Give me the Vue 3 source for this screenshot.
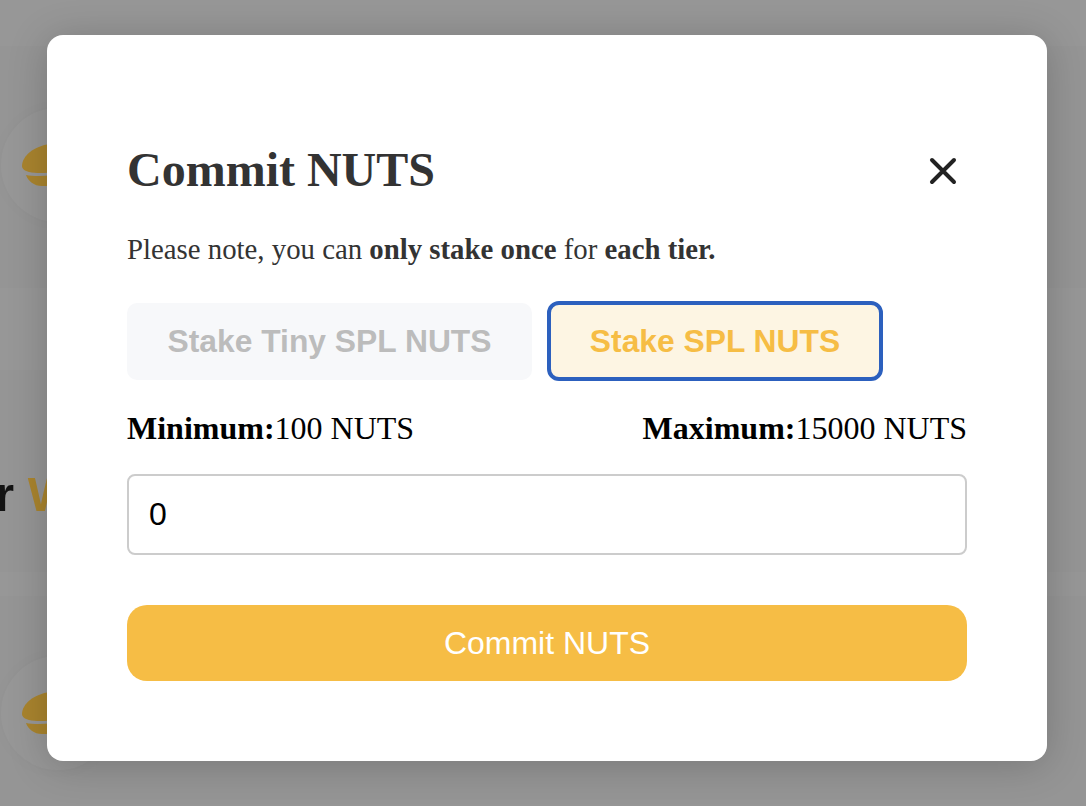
<script setup>
const tiers = [
  { label: 'Stake Tiny SPL NUTS', active: false },
  { label: 'Stake SPL NUTS', active: true },
]
</script>

<template>
  <div class="page">
    <div class="backdrop-page">
      <section class="row row-top">
        <div class="coin-circle">
          <svg class="coin" viewBox="0 0 60 46" width="60" height="46">
            <path d="M2 23C2 13 14 3 30 1L45 1L45 27C35 30 18 31 9 29C5 28 2 26 2 23Z" />
            <path d="M6 32C16 34 32 33 45 30L45 43L22 43C14 43 8 38 6 32Z" />
          </svg>
        </div>
      </section>
      <section class="row row-mid">
        <h2 class="bg-heading">r <span>W</span></h2>
      </section>
      <section class="row row-bottom">
        <div class="coin-circle">
          <svg class="coin" viewBox="0 0 60 46" width="60" height="46">
            <path d="M2 23C2 13 14 3 30 1L45 1L45 27C35 30 18 31 9 29C5 28 2 26 2 23Z" />
            <path d="M6 32C16 34 32 33 45 30L45 43L22 43C14 43 8 38 6 32Z" />
          </svg>
        </div>
      </section>
    </div>
    <div class="overlay">
      <div class="modal">
        <header class="modal-head">
          <h1>Commit NUTS</h1>
          <button class="close" aria-label="Close">
            <svg viewBox="0 0 30 30" width="30" height="30">
              <path d="M4 4L26 26M26 4L4 26" />
            </svg>
          </button>
        </header>
        <p class="note">Please note, you can <b>only stake once</b> for <b>each tier.</b></p>
        <div class="tabs">
          <button v-for="t in tiers" :key="t.label" class="tab" :class="{ active: t.active }">{{ t.label }}</button>
        </div>
        <div class="limits">
          <span><b>Minimum:</b>100 NUTS</span>
          <span><b>Maximum:</b>15000 NUTS</span>
        </div>
        <input class="amount" type="text" value="0" />
        <button class="commit">Commit NUTS</button>
      </div>
    </div>
  </div>
</template>

<style>
html, body { margin: 0; padding: 0; }
</style>

<style scoped>
.page {
  position: relative;
  width: 1086px;
  height: 806px;
  overflow: hidden;
  font-family: "Liberation Sans", Arial, sans-serif;
}
.backdrop-page {
  display: flex;
  flex-direction: column;
  gap: 0;
  height: 806px;
  padding-top: 46px;
  box-sizing: border-box;
  background: #d9d9d9;
}
.row {
  display: flex;
  align-items: flex-start;
  background: #d6d6d6;
  box-sizing: border-box;
}
.row-top { height: 242px; padding-top: 62px; }
.row-mid { height: 202px; margin-top: 82px; padding-top: 96px; }
.row-bottom { flex: 1; margin-top: 24px; padding-top: 60px; }
.coin-circle {
  width: 114px;
  height: 114px;
  margin-left: 1px;
  border-radius: 50%;
  background: #d9d9d9;
  box-shadow: 0 0 14px rgba(0, 0, 0, 0.03);
  padding: 35px 0 0 19px;
  box-sizing: border-box;
}
.coin { display: block; fill: #f2bd42; }
.bg-heading {
  margin: 0 0 0 -5px;
  font-size: 49px;
  line-height: 56px;
  font-weight: 700;
  color: #1c1c1c;
  white-space: pre;
}
.bg-heading span { color: #f2bd42; }
.overlay {
  position: absolute;
  inset: 0;
  background: rgba(0, 0, 0, 0.3);
  display: flex;
  align-items: flex-start;
  padding: 35px 0 0 47px;
  box-sizing: border-box;
}
.modal {
  width: 1000px;
  height: 726px;
  box-sizing: border-box;
  padding: 107px 80px 0;
  background: #fff;
  border-radius: 16px;
  box-shadow: 0 4px 40px rgba(0, 0, 0, 0.2);
  display: flex;
  flex-direction: column;
  font-family: "Liberation Serif", "Times New Roman", serif;
}
.modal-head {
  display: flex;
  justify-content: space-between;
  align-items: center;
  height: 56px;
}
.modal-head h1 {
  margin: 0;
  font-size: 48px;
  line-height: 56px;
  font-weight: 700;
  color: #333;
}
.close {
  border: 0;
  background: none;
  padding: 0;
  width: 30px;
  height: 30px;
  margin: 2px 9px 0 0;
}
.close svg { display: block; }
.close path { stroke: #222; stroke-width: 4; stroke-linecap: round; fill: none; }
.note {
  margin: 35px 0 0;
  font-size: 28.8px;
  line-height: 32px;
  color: #333;
}
.tabs {
  display: flex;
  align-items: center;
  gap: 15px;
  margin-top: 36px;
}
.tab {
  height: 77px;
  width: 405px;
  padding: 0;
  border: 0;
  border-radius: 10px;
  background: #f7f8fa;
  color: #bcbcbc;
  font: 700 31.8px "Liberation Sans", Arial, sans-serif;
}
.tab.active {
  height: 80px;
  width: 336px;
  border: 4px solid #2c60be;
  border-radius: 12px;
  background: #fdf5e3;
  color: #f6bd45;
}
.limits {
  display: flex;
  justify-content: space-between;
  margin-top: 28px;
  font-size: 32px;
  line-height: 38px;
  color: #000;
}
.amount {
  margin-top: 27px;
  height: 81px;
  box-sizing: border-box;
  border: 2px solid #ccc;
  border-radius: 8px;
  padding: 0 20px;
  font: 32px "Liberation Sans", Arial, sans-serif;
  color: #000;
  background: #fff;
  outline: none;
}
.commit {
  margin-top: 50px;
  height: 76px;
  border: 0;
  border-radius: 20px;
  background: #f6bd45;
  color: #fff;
  font: 32px "Liberation Sans", Arial, sans-serif;
}
</style>
